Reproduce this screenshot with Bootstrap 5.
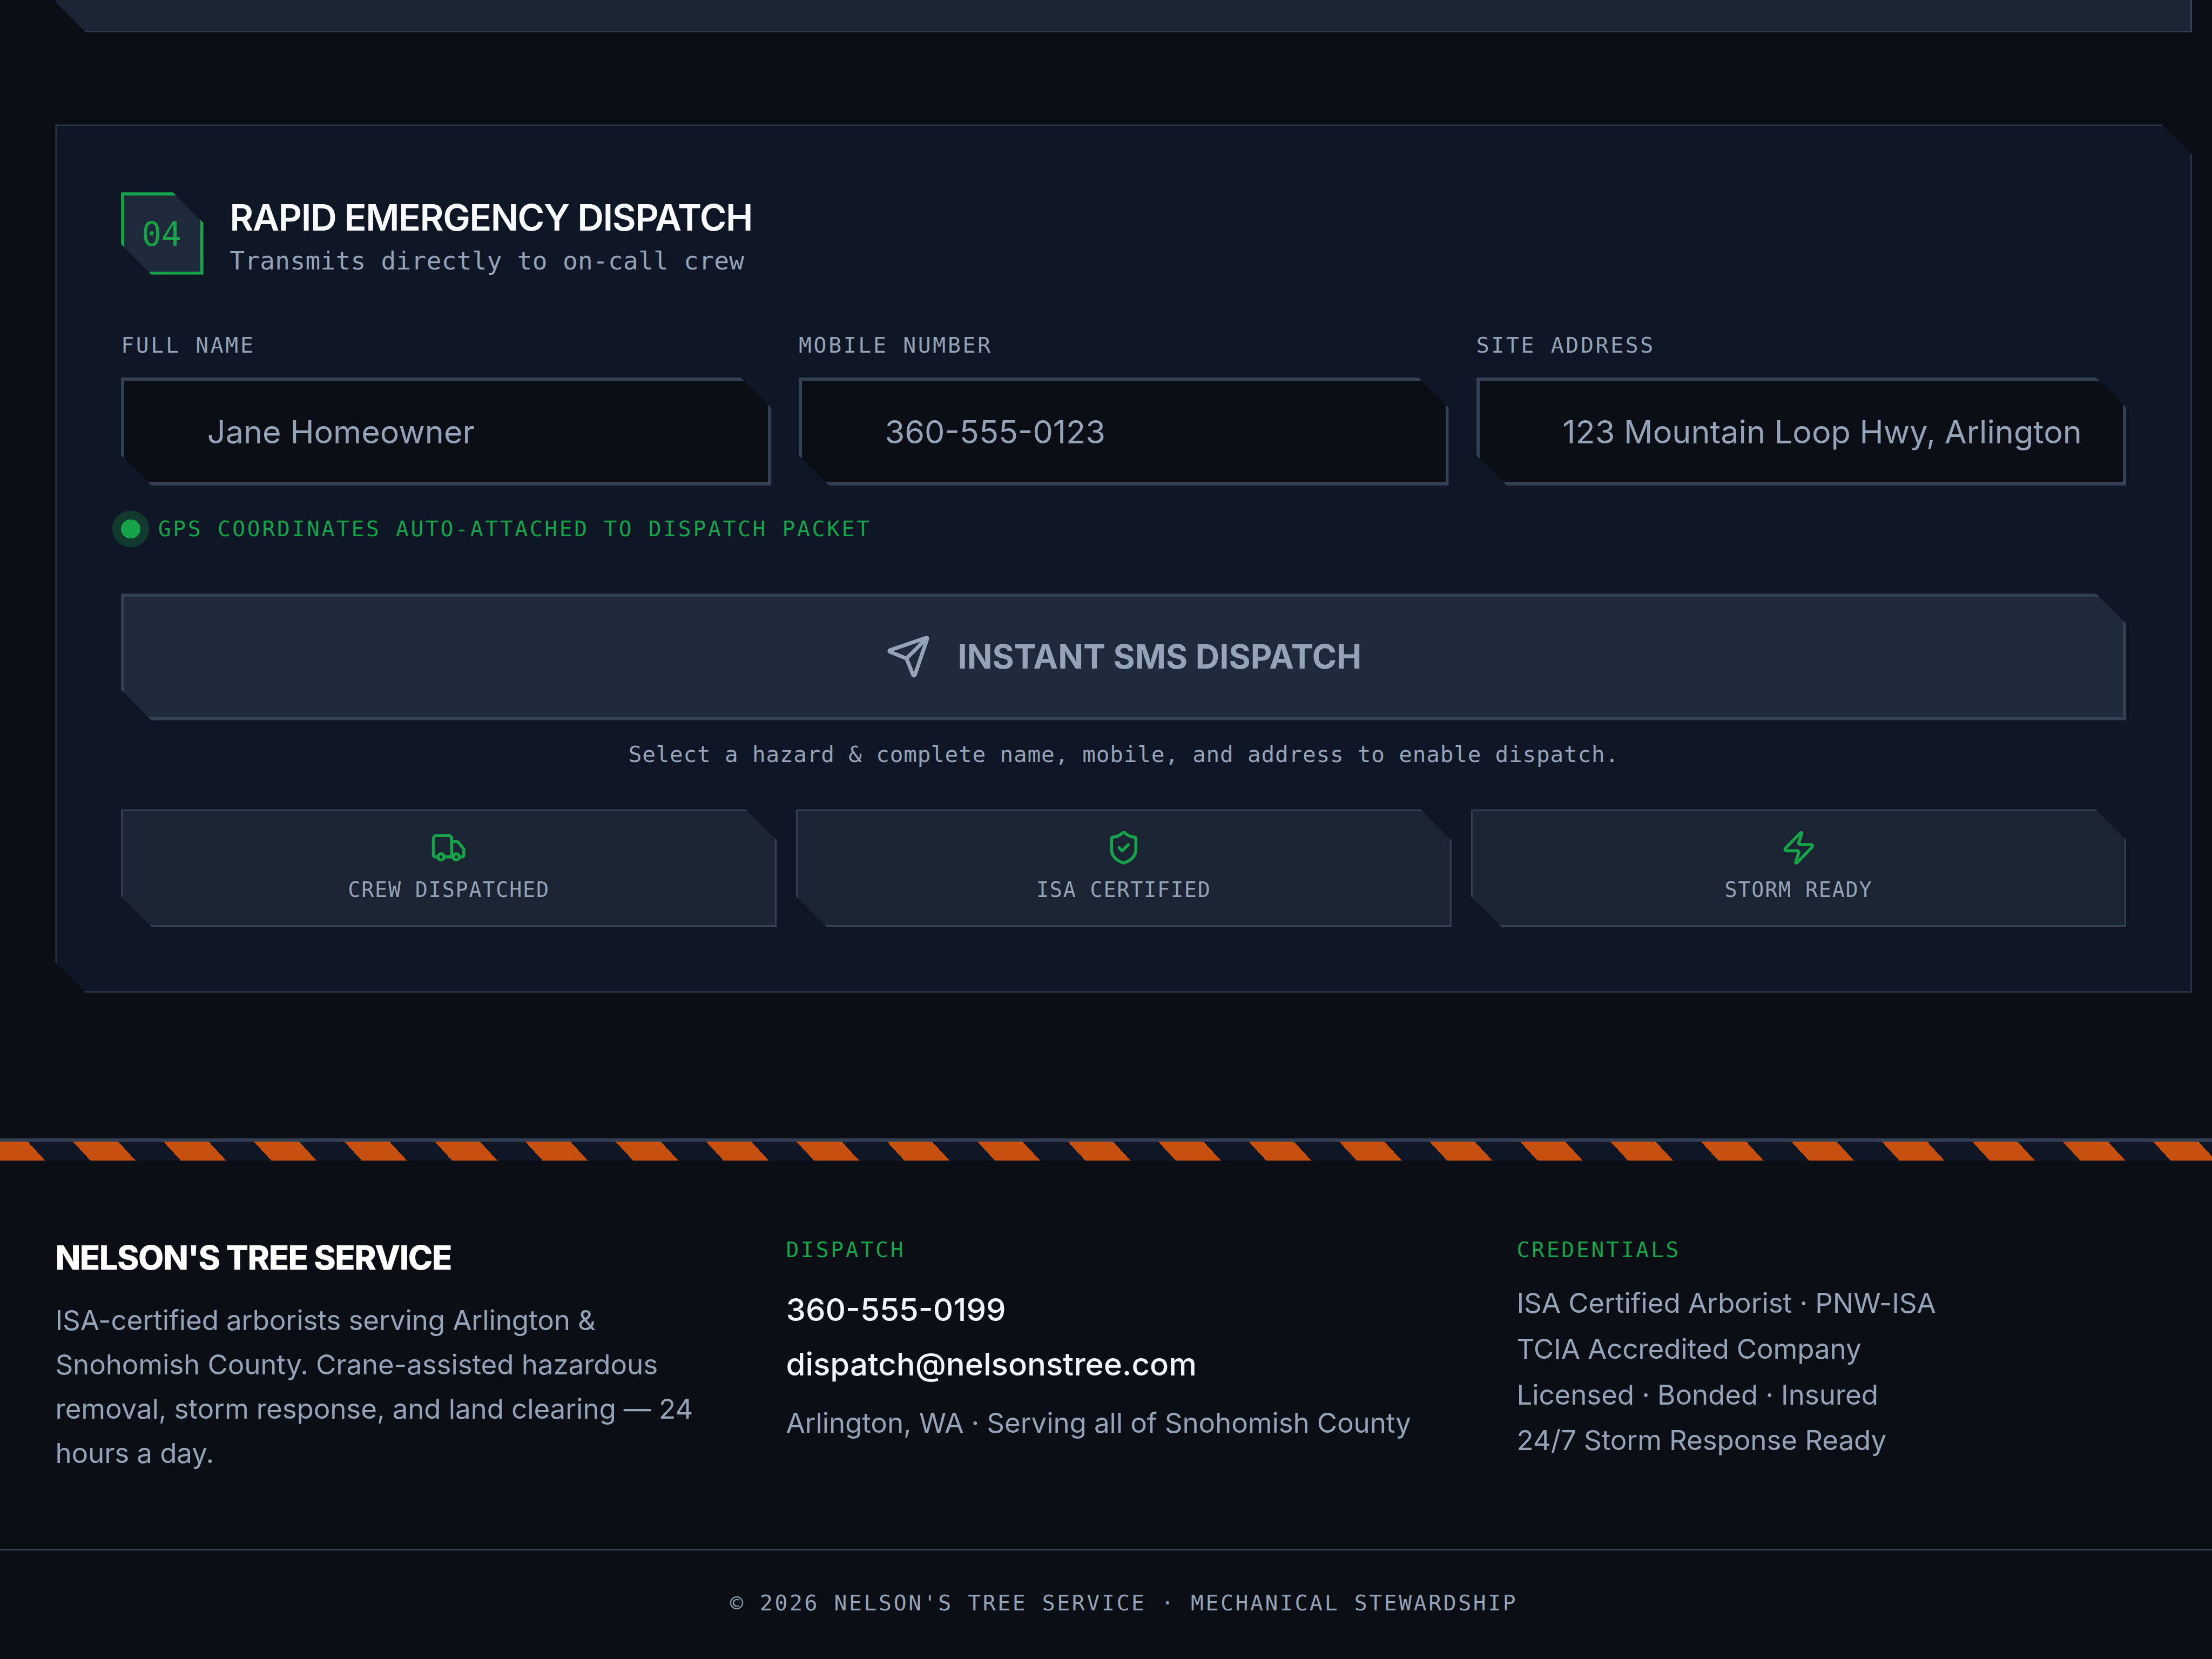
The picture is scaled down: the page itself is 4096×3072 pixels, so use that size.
<!DOCTYPE html>
<html lang="en">
<head>
    <meta charset="UTF-8">
    <meta name="viewport" content="width=device-width, initial-scale=1.0">
    <title>Nelson's Tree Service - Dispatch</title>
    <link rel="stylesheet" href="https://cdn.jsdelivr.net/npm/bootstrap@5.3.0/dist/css/bootstrap.min.css">
    <script src="https://cdn.jsdelivr.net/npm/bootstrap@5.3.0/dist/js/bootstrap.bundle.min.js" defer></script>
    <style>
        /* 1rem = 16 px of the source design, at the 4096 wide window */
        html { font-size: 40.96px; }
        body {
            background-color: #0b0e14;
            color: #94a3b8;
            font-family: "Inter", "Liberation Sans", sans-serif;
            overflow: hidden;
        }
        .mono { font-family: "DejaVu Sans Mono", "Liberation Mono", monospace; }
        .cut-corners {
            clip-path: polygon(0 0, calc(100% - 1.375rem) 0, 100% 1.375rem, 100% 100%, 1.375rem 100%, 0 calc(100% - 1.375rem));
        }

        .page-main { padding: 0 0.9rem 0 2.5rem; }
        .prev-strip {
            height: 1.456rem;
            background: #1a2433;
            border-right: 0.08rem solid #334155;
            border-bottom: 0.08rem solid #334155;
            clip-path: polygon(0 0, 100% 0, 100% 100%, 1.375rem 100%, 0 calc(100% - 1.375rem));
            margin-bottom: 4.169rem;
        }
        .dispatch-panel {
            background: #0f1625;
            border: 0.08rem solid #2a3648;
            border-radius: 0;
            padding: 3rem 2.9rem 2.9rem;
            height: 39.25rem;
        }
        .panel-head { gap: 1.19rem; }
        .step-badge {
            width: 3.72rem;
            height: 3.72rem;
            background: #1e293b;
            border: 0.15rem solid #16a34a;
            color: #16a34a;
            font-size: 1.5rem;
            padding: 0.06rem 0.06rem 0 0;
        }
        .panel-title {
            font-size: 1.65rem;
            line-height: 2rem;
            font-weight: 600;
            letter-spacing: -0.036rem;
            color: #f8fafc;
            margin: 0.15rem 0 0;
        }
        .panel-sub {
            font-size: 1.125rem;
            line-height: 1.5rem;
            letter-spacing: 0.007rem;
            margin: 0.2rem 0 0;
        }
        .field-grid {
            display: grid;
            grid-template-columns: repeat(3, 1fr);
            gap: 1.25rem;
            margin-top: 2.44rem;
        }
        .field-label {
            display: block;
            font-size: 0.97rem;
            line-height: 1.25rem;
            letter-spacing: 0.09rem;
            margin: 0 0 0.82rem;
        }
        .field-input.form-control {
            height: 4.9rem;
            background: #0b0e14;
            border: 0.15rem solid #334155;
            border-radius: 0;
            padding: 0 0 0 3.75rem;
            font-size: 1.45rem;
            color: #94a3b8;
            box-shadow: none;
        }
        .field-input.form-control::placeholder { color: #94a3b8; opacity: 1; }
        .gps-note {
            color: #16a34a;
            font-size: 0.97rem;
            line-height: 1.25rem;
            letter-spacing: 0.088rem;
            margin-top: 1.33rem;
            gap: 0.8rem;
        }
        .gps-dot {
            width: 0.875rem;
            height: 0.875rem;
            border-radius: 50%;
            background: #16a34a;
            box-shadow: 0 0 0 0.4rem rgba(22, 163, 74, 0.25);
        }
        .sms-btn.btn {
            height: 5.72rem;
            width: 100%;
            margin-top: 2.3rem;
            background: #1e293b;
            border: 0.15rem solid #334155;
            border-radius: 0;
            color: #94a3b8;
            font-size: 1.5rem;
            font-weight: 700;
            gap: 1.2rem;
        }
        .sms-btn svg { width: 2.05rem; height: 2.05rem; }
        .help-line {
            font-size: 1rem;
            line-height: 1.5rem;
            letter-spacing: 0.02rem;
            margin: 0.82rem 0 0;
        }
        .trust-grid {
            display: grid;
            grid-template-columns: repeat(3, 1fr);
            gap: 0.875rem;
            margin-top: 1.72rem;
        }
        .trust-tile {
            height: 5.3rem;
            background: #1a2433;
            border: 0.08rem solid #334155;
            padding-top: 0.83rem;
        }
        .trust-tile svg { width: 1.65rem; height: 1.65rem; color: #16a34a; display: block; }
        .trust-tile span {
            font-size: 0.9375rem;
            line-height: 1.25rem;
            letter-spacing: 0.044rem;
            margin-top: 0.46rem;
        }

        .hazard-band {
            height: 1rem;
            margin-top: 6.6rem;
            border-top: 0.17rem solid #334155;
            background: repeating-linear-gradient(47.2deg, #c8500e 0, #c8500e 1.5rem, #0f1625 1.5rem, #0f1625 3rem);
        }
        .foot-grid {
            display: grid;
            grid-template-columns: repeat(3, 1fr);
            gap: 2.5rem;
            padding: 3.3rem 0.9rem 3.33rem 2.5rem;
        }
        .foot-brand {
            font-size: 1.5rem;
            line-height: 2.2rem;
            font-weight: 800;
            letter-spacing: -0.038rem;
            color: #fff;
            margin: 0;
        }
        .foot-copy {
            font-size: 1.25rem;
            line-height: 2rem;
            letter-spacing: -0.004rem;
            margin: 0.72rem 0 0;
        }
        .foot-head {
            color: #16a34a;
            font-size: 0.97rem;
            line-height: 1.5rem;
            letter-spacing: 0.09rem;
            margin: 0;
        }
        .foot-strong {
            display: block;
            font-size: 1.42rem;
            line-height: 1.875rem;
            font-weight: 500;
            color: #f1f5f9;
            text-decoration: none;
            margin-top: 1rem;
        }
        .foot-strong + .foot-strong { margin-top: 0.6rem; }
        .foot-line { font-size: 1.25rem; line-height: 2rem; letter-spacing: -0.004rem; margin: 0.7rem 0 0; }
        .foot-list { font-size: 1.25rem; line-height: 2.07rem; letter-spacing: -0.004rem; margin: 0.59rem 0 0; padding: 0; list-style: none; }
        .foot-bottom {
            border-top: 0.08rem solid #334155;
            padding: 1.64rem 0 1.71rem 1.62rem;
            font-size: 0.97rem;
            line-height: 1.5rem;
            letter-spacing: 0.088rem;
        }
    </style>
</head>
<body>
    <main class="page-main">
        <div class="prev-strip"></div>

        <section class="card dispatch-panel cut-corners">
            <div class="panel-head d-flex align-items-start">
                <div class="step-badge cut-corners mono d-flex align-items-center justify-content-center flex-shrink-0">04</div>
                <div>
                    <h2 class="panel-title">RAPID EMERGENCY DISPATCH</h2>
                    <p class="panel-sub mono">Transmits directly to on-call crew</p>
                </div>
            </div>

            <form>
                <div class="field-grid">
                    <div>
                        <label class="field-label mono" for="f-name">FULL NAME</label>
                        <input id="f-name" class="form-control field-input cut-corners" type="text" placeholder="Jane Homeowner">
                    </div>
                    <div>
                        <label class="field-label mono" for="f-mobile">MOBILE NUMBER</label>
                        <input id="f-mobile" class="form-control field-input cut-corners" type="tel" placeholder="360-555-0123">
                    </div>
                    <div>
                        <label class="field-label mono" for="f-site">SITE ADDRESS</label>
                        <input id="f-site" class="form-control field-input cut-corners" type="text" placeholder="123 Mountain Loop Hwy, Arlington">
                    </div>
                </div>

                <div class="gps-note mono d-flex align-items-center">
                    <span class="gps-dot flex-shrink-0"></span>
                    <span>GPS COORDINATES AUTO-ATTACHED TO DISPATCH PACKET</span>
                </div>

                <button type="button" class="btn sms-btn cut-corners d-flex align-items-center justify-content-center">
                    <svg viewBox="0 0 24 24" fill="none" stroke="currentColor" stroke-width="2" stroke-linecap="round" stroke-linejoin="round">
                        <path d="M14.536 21.686a.5.5 0 0 0 .937-.024l6.5-19a.496.496 0 0 0-.635-.635l-19 6.5a.5.5 0 0 0-.024.937l7.93 3.18a2 2 0 0 1 1.112 1.11z"/>
                        <path d="m21.854 2.147-10.94 10.939"/>
                    </svg>
                    <span>INSTANT SMS DISPATCH</span>
                </button>
                <p class="help-line mono text-center">Select a hazard &amp; complete name, mobile, and address to enable dispatch.</p>
            </form>

            <div class="trust-grid">
                <div class="trust-tile cut-corners d-flex flex-column align-items-center">
                    <svg viewBox="0 0 24 24" fill="none" stroke="currentColor" stroke-width="2" stroke-linecap="round" stroke-linejoin="round">
                        <path d="M14 18V6a2 2 0 0 0-2-2H4a2 2 0 0 0-2 2v11a1 1 0 0 0 1 1h2"/>
                        <path d="M15 18H9"/>
                        <path d="M19 18h2a1 1 0 0 0 1-1v-3.65a1 1 0 0 0-.22-.624l-3.48-4.35A1 1 0 0 0 17.52 8H14"/>
                        <circle cx="17" cy="18" r="2"/>
                        <circle cx="7" cy="18" r="2"/>
                    </svg>
                    <span class="mono">CREW DISPATCHED</span>
                </div>
                <div class="trust-tile cut-corners d-flex flex-column align-items-center">
                    <svg viewBox="0 0 24 24" fill="none" stroke="currentColor" stroke-width="2" stroke-linecap="round" stroke-linejoin="round">
                        <path d="M20 13c0 5-3.5 7.5-7.66 8.95a1 1 0 0 1-.67-.01C7.5 20.5 4 18 4 13V6a1 1 0 0 1 1-1c2 0 4.5-1.2 6.24-2.72a1.17 1.17 0 0 1 1.52 0C14.51 3.81 17 5 19 5a1 1 0 0 1 1 1z"/>
                        <path d="m9 12 2 2 4-4"/>
                    </svg>
                    <span class="mono">ISA CERTIFIED</span>
                </div>
                <div class="trust-tile cut-corners d-flex flex-column align-items-center">
                    <svg viewBox="0 0 24 24" fill="none" stroke="currentColor" stroke-width="2" stroke-linecap="round" stroke-linejoin="round">
                        <path d="M4 14a1 1 0 0 1-.78-1.63l9.9-10.2a.5.5 0 0 1 .86.46l-1.92 6.02A1 1 0 0 0 13 10h7a1 1 0 0 1 .78 1.63l-9.9 10.2a.5.5 0 0 1-.86-.46l1.92-6.02A1 1 0 0 0 11 14z"/>
                    </svg>
                    <span class="mono">STORM READY</span>
                </div>
            </div>
        </section>
    </main>

    <footer>
        <div class="hazard-band"></div>
        <div class="foot-grid">
            <div>
                <h3 class="foot-brand">NELSON'S TREE SERVICE</h3>
                <p class="foot-copy">ISA-certified arborists serving Arlington &amp; Snohomish County. Crane-assisted hazardous removal, storm response, and land clearing — 24 hours a day.</p>
            </div>
            <div>
                <h4 class="foot-head mono">DISPATCH</h4>
                <a class="foot-strong" href="#">360-555-0199</a>
                <a class="foot-strong" href="#">dispatch@nelsonstree.com</a>
                <p class="foot-line">Arlington, WA · Serving all of Snohomish County</p>
            </div>
            <div>
                <h4 class="foot-head mono">CREDENTIALS</h4>
                <ul class="foot-list">
                    <li>ISA Certified Arborist · PNW-ISA</li>
                    <li>TCIA Accredited Company</li>
                    <li>Licensed · Bonded · Insured</li>
                    <li>24/7 Storm Response Ready</li>
                </ul>
            </div>
        </div>
        <div class="foot-bottom mono text-center">© 2026 NELSON'S TREE SERVICE · MECHANICAL STEWARDSHIP</div>
    </footer>
</body>
</html>
